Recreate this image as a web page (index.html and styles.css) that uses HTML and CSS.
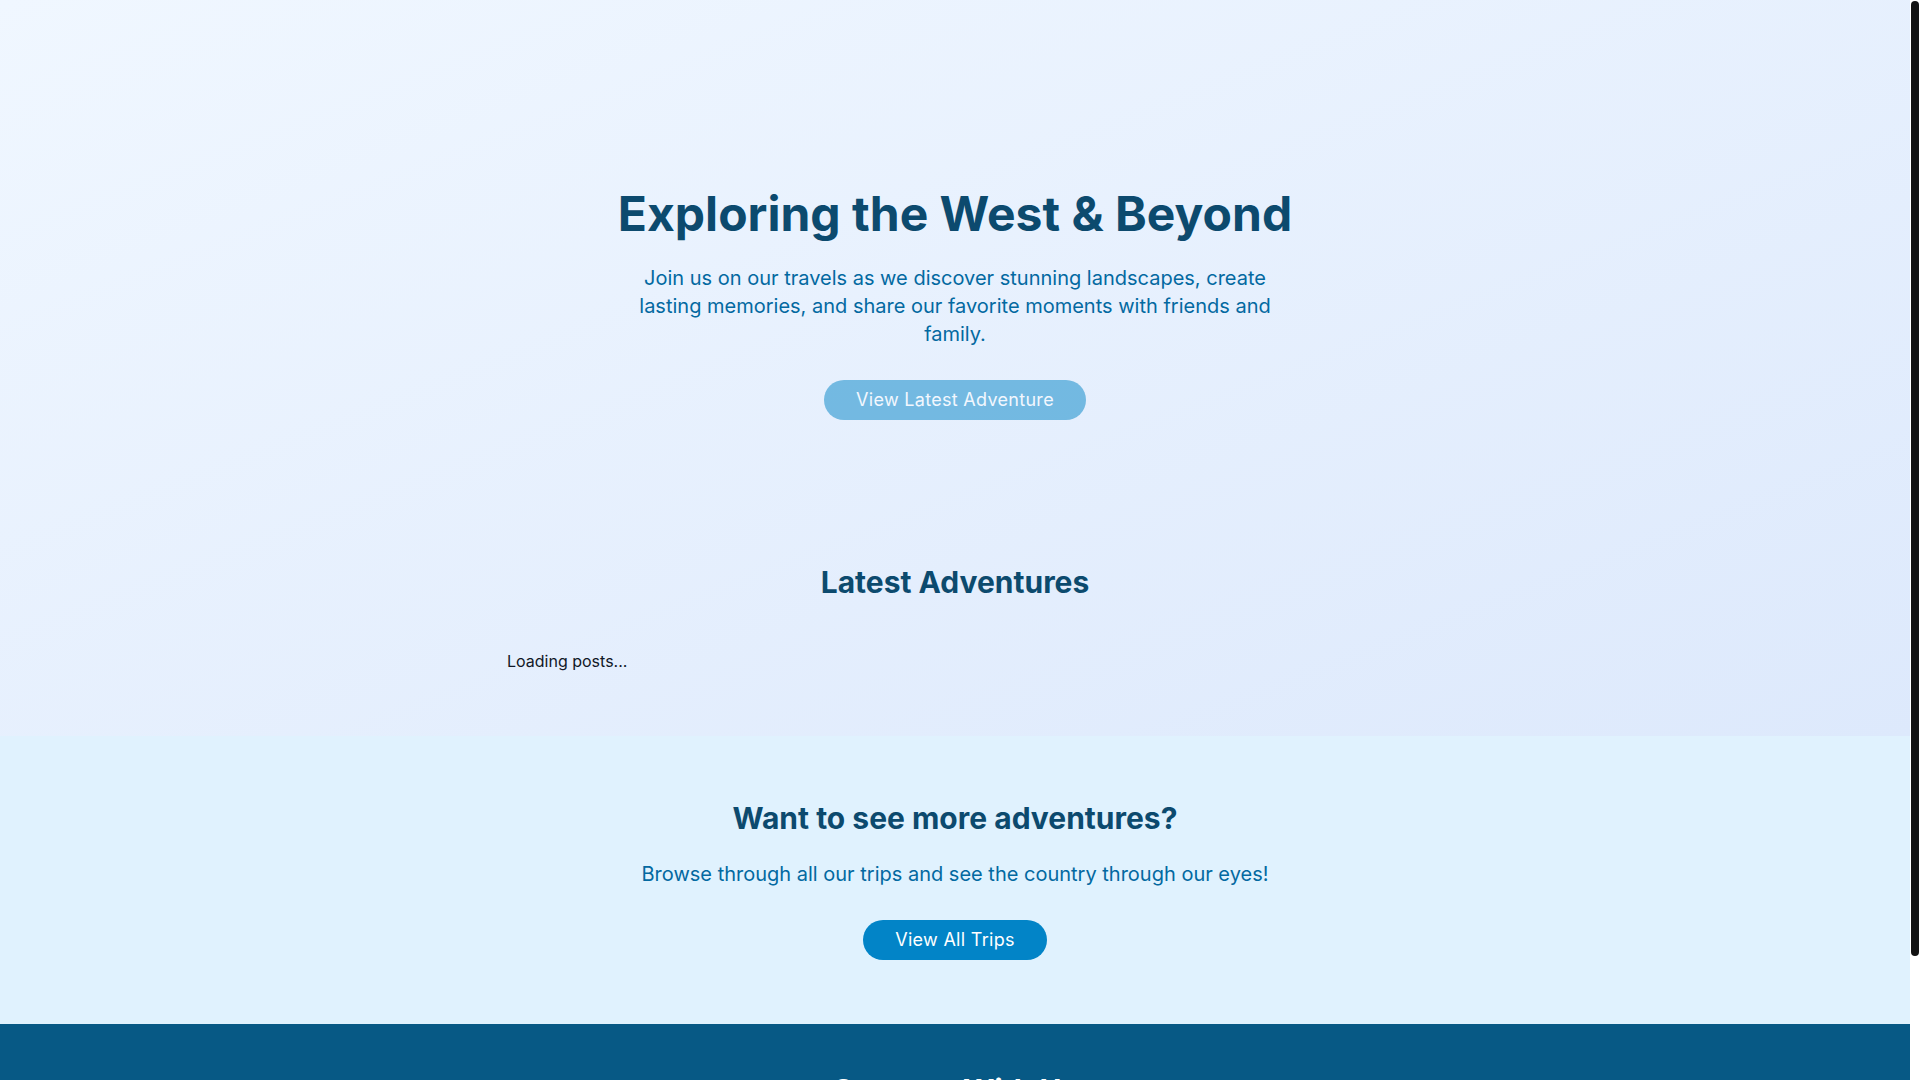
FILE: index.html
```html
<!DOCTYPE html>
<html lang="en">
<head>
<meta charset="utf-8">
<title>Exploring the West &amp; Beyond</title>
<link rel="stylesheet" href="styles.css">
</head>
<body>
<div class="page">
  <div class="top">
    <section class="hero">
      <h1 class="hero-title">Exploring the West &amp; Beyond</h1>
      <p class="hero-text">Join us on our travels as we discover stunning landscapes, create lasting memories, and share our favorite moments with friends and family.</p>
      <button class="btn btn-disabled" disabled>View Latest Adventure</button>
    </section>
    <section class="latest">
      <h2 class="section-title">Latest Adventures</h2>
      <div class="posts">
        <p class="loading">Loading posts...</p>
      </div>
    </section>
  </div>
  <section class="cta">
    <h2 class="section-title cta-title">Want to see more adventures?</h2>
    <p class="cta-text">Browse through all our trips and see the country through our eyes!</p>
    <a class="btn" href="#">View All Trips</a>
  </section>
  <footer class="footer">
    <h3 class="footer-title">Connect With Us</h3>
    <div class="footer-links">
      <a href="#">Instagram</a>
      <a href="#">Facebook</a>
      <a href="#">Email</a>
    </div>
    <p class="copyright">&copy; 2024 Exploring the West &amp; Beyond. All rights reserved.</p>
  </footer>
</div>
<div class="scrollbar" aria-hidden="true"><div class="scrollbar-thumb"></div></div>
</body>
</html>
```
FILE: styles.css
```css
* { box-sizing: border-box; }
html, body { margin: 0; padding: 0; }
body {
  font-family: Inter, "Noto Sans", "Liberation Sans", sans-serif;
  color: #111827;
  background: #ffffff;
}
.page {
  margin-right: 10px;
  background: #e0f2fe;
}
.scrollbar {
  position: fixed;
  top: 0;
  right: 0;
  width: 10px;
  height: 100vh;
  background: #ffffff;
  padding: 1px 1px;
}
.scrollbar-thumb {
  width: 8px;
  height: 955px;
  background: #111111;
  border-radius: 4px;
}
.top {
  background: linear-gradient(to bottom right, #f0f7ff, #dde9fc);
}
.hero {
  display: flex;
  flex-direction: column;
  align-items: center;
  text-align: center;
  padding: 190px 16px 80px;
}
.hero-title {
  margin: 0 0 26px;
  font-size: 48px;
  line-height: 48px;
  font-weight: 700;
  color: #0c4a6e;
}
.hero-text {
  margin: 0 0 32px;
  max-width: 672px;
  font-size: 20px;
  line-height: 28px;
  color: #0369a1;
}
.btn {
  display: inline-block;
  padding: 6px 32px;
  font-family: inherit;
  font-size: 18px;
  line-height: 28px;
  font-weight: 400;
  letter-spacing: 0.3px;
  color: #ffffff;
  background: #0284c7;
  border: none;
  border-radius: 9999px;
  text-decoration: none;
  cursor: pointer;
}
.btn-disabled { opacity: 0.5; cursor: default; }
.latest {
  padding: 64px 16px 63px;
}
.section-title {
  margin: 0 0 49px;
  text-align: center;
  font-size: 30px;
  line-height: 36px;
  font-weight: 700;
  color: #0c4a6e;
}
.posts {
  max-width: 896px;
  margin: 0 auto;
}
.loading {
  margin: 0;
  font-size: 16px;
  line-height: 24px;
  color: #111827;
}
.cta {
  display: flex;
  flex-direction: column;
  align-items: center;
  text-align: center;
  padding: 64px 16px;
  background: #e0f2fe;
}
.cta-title { margin-bottom: 24px; }
.cta-text {
  margin: 0 0 32px;
  font-size: 20px;
  line-height: 28px;
  color: #0369a1;
}
.footer {
  background: #075985;
  color: #ffffff;
  text-align: center;
  padding: 48px 16px 32px;
}
.footer-title {
  margin: 0 0 16px;
  font-size: 30px;
  line-height: 36px;
  font-weight: 700;
}
.footer-links {
  display: flex;
  justify-content: center;
  gap: 24px;
  margin-bottom: 24px;
}
.footer-links a {
  color: #e0f2fe;
  text-decoration: none;
  font-size: 16px;
  line-height: 24px;
}
.copyright {
  margin: 0;
  font-size: 14px;
  line-height: 20px;
  color: #bae6fd;
}
```
